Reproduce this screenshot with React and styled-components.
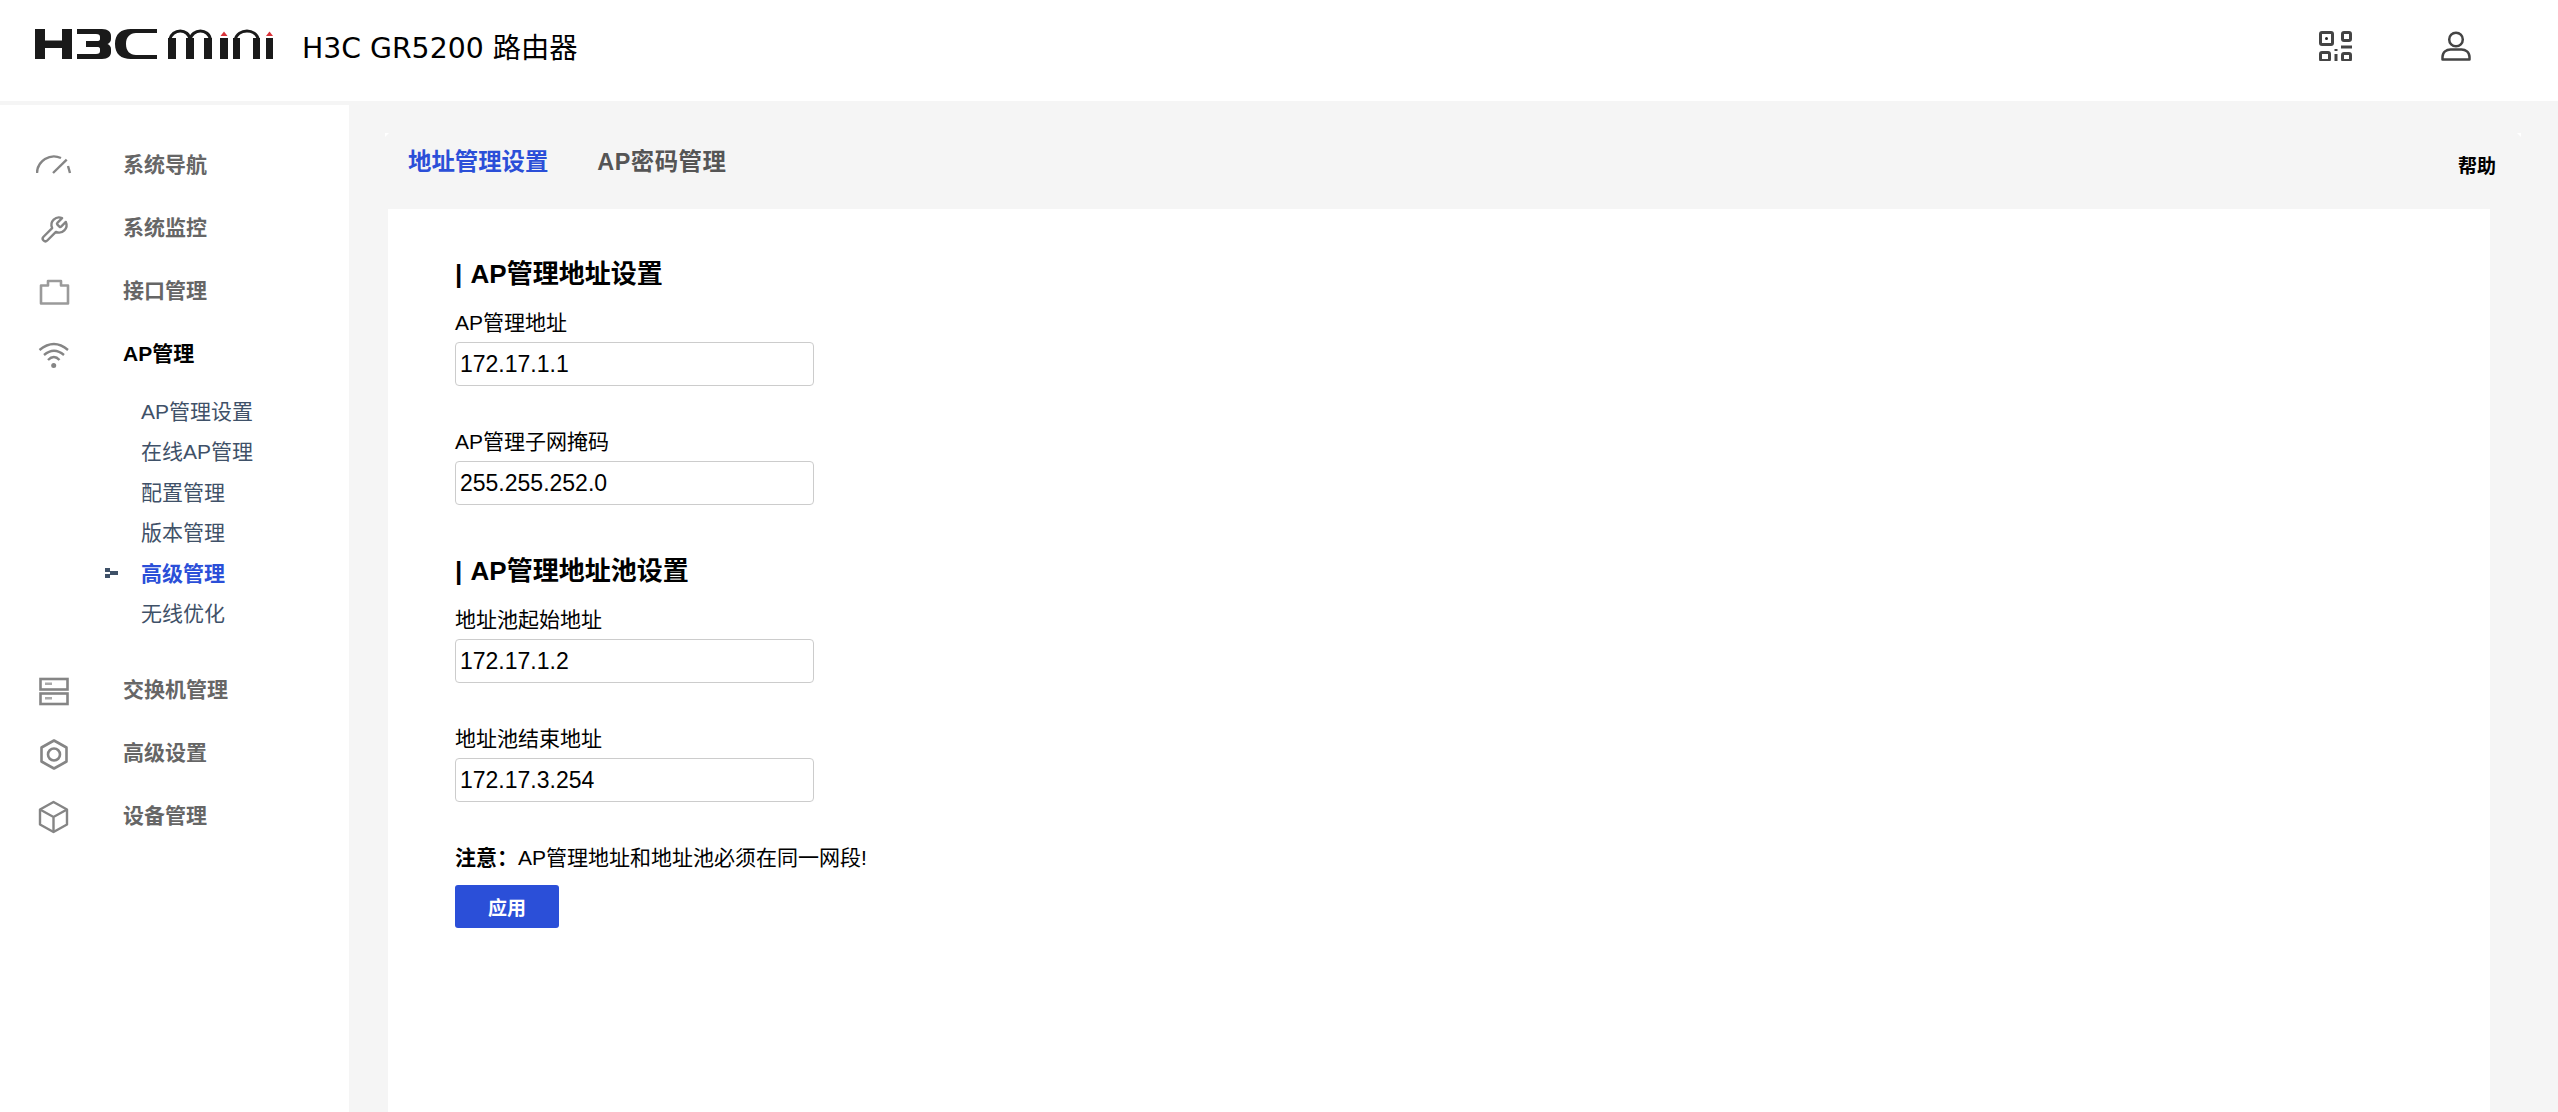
import React from 'react';
import styled, { createGlobalStyle } from 'styled-components';

const Global = createGlobalStyle`
  html, body { margin: 0; padding: 0; background: #f5f5f5; }
  #root { height: 1112px; overflow: hidden; }
  * { box-sizing: border-box; }
`;
const SANS = `"Liberation Sans", "Noto Sans CJK SC", sans-serif`;
const Page = styled.div`display:flex;flex-direction:column;height:1112px;font-family:${SANS};color:#000;`;
const Header = styled.header`height:101px;flex:none;background:#fff;display:flex;align-items:center;padding:0 87px 0 34px;`;
const LogoSvg = styled.svg`width:240px;height:32px;flex:none;margin-bottom:13px;`;
const ProductName = styled.div`font-family:"DejaVu Sans","Noto Sans CJK SC",sans-serif;font-size:28.3px;margin-left:28px;margin-bottom:10px;`;
const HeaderIcons = styled.div`margin-left:auto;display:flex;gap:89px;align-items:center;margin-bottom:9px;`;
const Body = styled.div`flex:1;display:flex;min-height:0;`;
const Sidebar = styled.aside`width:349px;flex:none;background:#fff;margin-top:4px;padding-top:26px;`;
const NavItem = styled.div`display:flex;align-items:center;height:63px;padding-left:36px;color:${p=>p.$active?'#000':'#666'};font-size:21px;font-weight:700;`;
const NavIcon = styled.svg`width:36px;height:36px;flex:none;margin-right:51px;margin-top:6px;`;
const SubList = styled.div`display:flex;flex-direction:column;padding:9px 0 22px 141px;`;
const SubItem = styled.div`position:relative;height:40.4px;line-height:40px;font-size:21px;color:${p=>p.$active?'#2b4fd8':'#3f5168'};font-weight:${p=>p.$active?700:400};`;
const Marker = styled.svg`position:absolute;left:-36px;top:14px;width:13px;height:10px;`;
const Main = styled.main`flex:1;min-width:0;display:flex;flex-direction:column;position:relative;`;
const TabBar = styled.div`height:108px;flex:none;display:flex;align-items:center;padding:0 62px 0 59px;`;
const Tab = styled.div`font-size:23.4px;font-weight:700;color:${p=>p.$active?'#2b4fd8':'#555'};letter-spacing:${p=>p.$active?0:0.5}px;margin-right:49px;margin-top:9px;`;
const Help = styled.div`margin-left:auto;font-size:19px;font-weight:700;margin-top:18px;`;
const Notch = styled.span`position:absolute;top:32px;left:${p=>p.$x}px;width:4px;height:4px;background:#fff;clip-path:${p=>p.$right?'polygon(0 0,100% 0,100% 100%)':'polygon(0 0,100% 0,0 100%)'};`;
const Card = styled.div`flex:1;margin:0 68px 0 39px;background:#fff;padding:48px 67px 0;`;
const Title = styled.h2`margin:${p=>p.$top||0}px 0 0;font-size:26px;font-weight:700;line-height:34px;word-spacing:2px;`;
const Field = styled.div`display:flex;flex-direction:column;margin-top:${p=>p.$top||0}px;`;
const Label = styled.label`font-size:21px;line-height:30px;`;
const Input = styled.input`width:359px;height:44px;margin-top:4px;border:1px solid #ccc;border-radius:4px;padding:0 4px;font:23px ${SANS};color:#000;background:#fff;outline:none;`;
const Note = styled.p`margin:41px 0 0;font-size:21px;line-height:30px;`;
const Apply = styled.button`display:block;margin-top:12px;width:104px;height:43px;background:#2b4fd8;color:#fff;border:none;border-radius:3px;font:700 19px ${SANS};`;

const I = ({children, ...p}) => <NavIcon viewBox="0 0 36 36" fill="none" stroke="#858585" strokeWidth="2.4" {...p}>{children}</NavIcon>;
const Gauge = () => <I><path d="M1 25A17 17 0 0 1 25 10"/><path d="M17 25 30.700 11.700"/><path d="M32 18 34 25"/></I>;
const Wrench = () => <I><g transform="translate(3 4) scale(1.25)" strokeWidth="1.900" strokeLinejoin="round"><path d="M14.700 6.300a1 1 0 0 0 0 1.400l1.600 1.600a1 1 0 0 0 1.400 0l3.770-3.770a6 6 0 0 1-7.940 7.940l-6.910 6.910a2.120 2.120 0 0 1-3-3l6.910-6.910a6 6 0 0 1 7.940-7.940l-3.760 3.760z"/></g></I>;
const Port = () => <I stroke="#9a9a9a" strokeWidth="2.600"><path d="M5 29.500V11.500H12V7H25V11.500H32V29.500Z" strokeLinejoin="round"/></I>;
const Wifi = () => <I><path d="M3.500 13Q18 1 32 13"/><path d="M8 18Q18 9.500 28 18"/><path d="M12 23Q18 17 23.500 23"/><circle cx="17.700" cy="28.500" r="2.500" fill="#858585" stroke="none"/></I>;
const Switches = () => <I strokeWidth="2.600"><rect x="4.500" y="6" width="27" height="10.500"/><rect x="4.500" y="20.500" width="27" height="10.500"/><path d="M9 10.700h7M9 25.200h7" stroke="#aaa"/></I>;
const Nut = () => <I strokeWidth="2.600"><path d="M18 4.500l12.500 7v14l-12.500 7-12.500-7v-14z" strokeLinejoin="round"/><circle cx="18" cy="18.500" r="6"/></I>;
const Box = () => <I strokeWidth="2.400"><path d="M17.500 3l13.500 7.500v15L17.500 33 4 25.500v-15z" strokeLinejoin="round"/><path d="M4 10.500l13.500 7.500 13.500-7.500M17.500 18v15"/></I>;

const Logo = () => (
  <LogoSvg viewBox="0 0 240 32" fill="none">
    <g fill="#1a1a1a">
      <rect x="1" y="1" width="10" height="30"/><rect x="28" y="1" width="10" height="30"/><rect x="9" y="12.500" width="21" height="7.500"/>
      <path d="M43 1H68C74 1 77 4 77 8V11C77 13.500 75.500 15 73.500 16C75.500 17 77 18.500 77 21V24C77 28 74 31 68 31H43V26H62C65 26 66 25 66 23V21C66 19.500 65 19 63 19H52V13H63C65 13 66 12.500 66 11V9C66 7 65 6 62 6H43Z"/>
      <path d="M123 1H97c-10 0-16 5-16 15s6 15 16 15h26v-4h-21c-6 0-10-4-10-11s4-11 10-11h21z"/>
      <rect x="134" y="10" width="8" height="21"/><rect x="152" y="10" width="8" height="21"/><rect x="170" y="10" width="8" height="21"/>
      <rect x="186" y="10" width="8" height="21"/>
      <rect x="199" y="10" width="7" height="21"/><rect x="219" y="10" width="7" height="21"/>
      <rect x="232" y="10" width="7" height="21"/>
    </g>
    <g stroke="#1a1a1a" strokeWidth="3" fill="none">
      <path d="M135.500 12C138 0 155 0 156 12M156 12C158 0 175 0 176.500 12"/>
      <path d="M201 12C204 0 222 0 224.500 12"/>
    </g>
    <g fill="#d9343a"><path d="M186.500 8 190 3.500 193.500 8z"/><path d="M232 8 235.500 3.500 239 8z"/></g>
  </LogoSvg>
);

const nav1 = [[Gauge,'系统导航'],[Wrench,'系统监控'],[Port,'接口管理'],[Wifi,'AP管理',true]];
const nav2 = [[Switches,'交换机管理'],[Nut,'高级设置'],[Box,'设备管理']];
const subs = ['AP管理设置','在线AP管理','配置管理','版本管理','高级管理','无线优化'];

export default function App() {
  return (
    <Page>
      <Global/>
      <Header>
        <Logo/>
        <ProductName>H3C GR5200 路由器</ProductName>
        <HeaderIcons>
          <svg width="33" height="30" viewBox="0 0 33 30" fill="none" stroke="#444" strokeWidth="3">
            <rect x="1.500" y="1.500" width="12" height="12" rx="1.500"/><circle cx="7.500" cy="7.500" r="1.500" fill="#222" stroke="none"/>
            <rect x="23.500" y="1.500" width="8" height="8" rx="1.500"/>
            <path d="M22 16h11"/>
            <rect x="1.500" y="21.500" width="9" height="8" rx="1.500"/>
            <path d="M17 23v7M17 18v2"/>
            <rect x="23.500" y="22.500" width="8" height="7" rx="1.500"/>
          </svg>
          <svg width="30" height="30" viewBox="0 0 30 30" fill="none" stroke="#444" strokeWidth="2.500">
            <circle cx="15" cy="8.500" r="6.800"/>
            <path d="M1.500 26c0-5 4-7.500 8-7.500h11c4 0 8 2.500 8 7.500v2.500H1.500z" strokeLinejoin="round"/>
          </svg>
        </HeaderIcons>
      </Header>
      <Body>
        <Sidebar>
          {nav1.map(([Ic,t,a])=><NavItem key={t} $active={a}><Ic/>{t}</NavItem>)}
          <SubList>
            {subs.map((s,i)=><SubItem key={s} $active={i===4}>
              {i===4 && <Marker viewBox="0 0 13 10" fill="#3f5168"><rect x="0" y="0" width="5" height="4"/><rect x="0" y="6" width="5" height="4"/><rect x="5" y="3" width="8" height="4"/></Marker>}
              {s}</SubItem>)}
          </SubList>
          {nav2.map(([Ic,t])=><NavItem key={t}><Ic/>{t}</NavItem>)}
        </Sidebar>
        <Main>
          <Notch $x={36}/><Notch $x={2168} $right/>
          <TabBar>
            <Tab $active>地址管理设置</Tab>
            <Tab>AP密码管理</Tab>
            <Help>帮助</Help>
          </TabBar>
          <Card>
            <Title>| AP管理地址设置</Title>
            <Field $top={17}><Label>AP管理地址</Label><Input defaultValue="172.17.1.1"/></Field>
            <Field $top={41}><Label>AP管理子网掩码</Label><Input defaultValue="255.255.252.0"/></Field>
            <Title $top={49}>| AP管理地址池设置</Title>
            <Field $top={17}><Label>地址池起始地址</Label><Input defaultValue="172.17.1.2"/></Field>
            <Field $top={41}><Label>地址池结束地址</Label><Input defaultValue="172.17.3.254"/></Field>
            <Note><b>注意：</b>AP管理地址和地址池必须在同一网段!</Note>
            <Apply>应用</Apply>
          </Card>
        </Main>
      </Body>
    </Page>
  );
}
